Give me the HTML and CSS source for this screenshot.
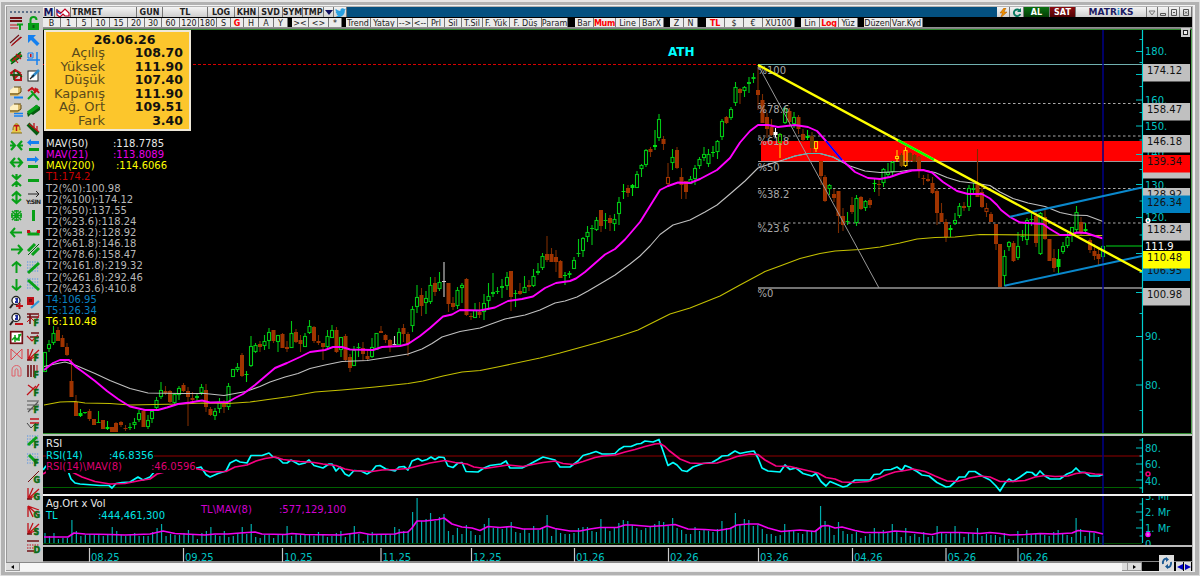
FILE: index.html
```html
<!DOCTYPE html>
<html lang="tr">
<head>
    <meta charset="UTF-8">
    <title>TRMET</title>
    <link rel="stylesheet" href="styles.css">
</head>
<body>
<div class="window">
    <aside class="sidebar">
        <div class="grip"></div>
        <div class="tools">
            <div class="tool-column" id="tools-left"></div>
            <div class="tool-column" id="tools-right"></div>
        </div>
    </aside>
    <main>
        <header class="titlebar">
            <button class="w12 logo">M</button>
            <button class="w16">
                <svg width="14" height="10" viewBox="0 0 14 10">
                    <path d="M1 2l4 3 4-4 4 4v3H9L7 6 4 9 1 7z" fill="#fff" stroke="#c00020" stroke-width="1.2"/>
                    <path d="M1 1v3l4 2" fill="none" stroke="#2040c0" stroke-width="1.2"/>
                </svg>
            </button>
            <button class="w66 left">TRMET</button>
            <button class="w26">GUN</button>
            <button class="w45">TL</button>
            <button class="w27">LOG</button>
            <button class="w24">KHN</button>
            <button class="w24">SVD</button>
            <button class="w20">SYM</button>
            <button class="w21">TMP</button>
            <button class="w10"><svg width="8" height="5" viewBox="0 0 8 5"><path d="M0 0h8L4 5z" fill="#101060"/></svg></button>
            <button class="w13">
                <svg width="11" height="9" viewBox="0 0 24 20"><path d="M24 3c-1 .4-1.800.6-2.800.8 1-.6 1.800-1.600 2.200-2.700-1 .6-2 1-3.100 1.200a4.900 4.900 0 0 0-8.400 4.500C7.700 6.600 4.100 4.600 1.700 1.700a4.900 4.900 0 0 0 1.500 6.500c-.8 0-1.600-.2-2.200-.6a5 5 0 0 0 4 4.900c-.7.2-1.500.2-2.200.1a5 5 0 0 0 4.600 3.400A10 10 0 0 1 0 18a14 14 0 0 0 21.500-12.500C22.500 5 23.300 4 24 3z" fill="#2a9fe0"/></svg>
            </button>
            <span class="fill"></span>
            <button class="w13"><svg width="9" height="10" viewBox="0 0 9 10"><path d="M5 0L1 5h2.500L1.500 10 8 4H5l2-4z" fill="#f09000" stroke="#a05000" stroke-width=".5"/></svg></button>
            <button class="w14"><svg width="10" height="10" viewBox="0 0 10 10"><path d="M8 3a3.300 3.300 0 1 0 .3 3" fill="none" stroke="#087860" stroke-width="1.900"/><path d="M9 0v4H5z" fill="#087860"/></svg></button>
            <button class="w26 buy">AL</button>
            <button class="w26 sell">SAT</button>
            <button class="w71 brand">MATR<i>i</i>KS</button>
            <button class="w11"><svg width="8" height="6" viewBox="0 0 8 6"><path d="M1 1h6L4 5z" fill="none" stroke="#777"/></svg></button>
            <button class="w11"><svg width="6" height="6" viewBox="0 0 6 6"><path d="M.5 3.500h5v2h-5z" fill="none" stroke="#555"/></svg></button>
            <button class="w11"><svg width="6" height="7" viewBox="0 0 6 7"><path d="M.5.5h5v6h-5zM2 3.500h2" fill="none" stroke="#555"/></svg></button>
            <button class="w12"><svg width="6" height="7" viewBox="0 0 6 7"><path d="M.5.5h5v6h-5zM2 2.500l2 2m0-2l-2 2" fill="none" stroke="#555"/></svg></button>
        </header>
        <nav class="toolbar" id="toolbar"></nav>

        <section class="pane price">
            <svg id="price" width="1149" height="404" viewBox="43 30 1149 404"></svg>
            <table class="quote">
                <caption>26.06.26</caption>
                <tr><th>Açılış</th><td>108.70</td></tr>
                <tr><th>Yüksek</th><td>111.90</td></tr>
                <tr><th>Düşük</th><td>107.40</td></tr>
                <tr><th>Kapanış</th><td>111.90</td></tr>
                <tr><th>Ağ. Ort</th><td>109.51</td></tr>
                <tr><th>Fark</th><td>3.40</td></tr>
            </table>
            <ul class="legend">
                <li class="white"><span>MAV(50)</span>:118.7785</li>
                <li class="magenta"><span>MAV(21)</span>:113.8089</li>
                <li class="yellow"><span class="wide">MAV(200)</span>:114.6066</li>
                <li class="red">T1:174.2</li>
                <li>T2(%0):100.98</li>
                <li>T2(%100):174.12</li>
                <li>T2(%50):137.55</li>
                <li>T2(%23.6):118.24</li>
                <li>T2(%38.2):128.92</li>
                <li>T2(%61.8):146.18</li>
                <li>T2(%78.6):158.47</li>
                <li>T2(%161.8):219.32</li>
                <li>T2(%261.8):292.46</li>
                <li>T2(%423.6):410.8</li>
                <li class="blue">T4:106.95</li>
                <li class="blue">T5:126.34</li>
                <li class="yellow">T6:110.48</li>
            </ul>
            <span class="maximize"></span>
        </section>
        <section class="pane rsi">
            <svg id="rsi" width="1149" height="58" viewBox="43 436 1149 58"></svg>
            <ul class="legend">
                <li class="white">RSI</li>
                <li class="cyan"><span>RSI(14)</span>:46.8356</li>
                <li class="pink"><span>RSI(14)\MAV(8)</span>:46.0596</li>
            </ul>
        </section>
        <section class="pane volume">
            <svg id="volume" width="1149" height="49" viewBox="43 496 1149 49"></svg>
            <ul class="legend">
                <li class="white">Ag.Ort x Vol</li>
                <li class="cyan"><span>TL</span>:444,461,300</li>
            </ul>
            <div class="legend average magenta"><span>TL\MAV(8)</span>:577,129,100</div>
        </section>
        <section class="pane months">
            <svg id="months" width="1149" height="15" viewBox="43 547 1149 15"></svg>
        </section>
    </main>
    <footer>
        <div class="scrollbar">
            <span class="thumb"><svg width="3" height="4" viewBox="0 0 3 4"><path d="M3 0v4L0 2z"/></svg></span>
            <span class="thumb small"></span>
            <span class="thumb"><svg width="3" height="4" viewBox="0 0 3 4"><path d="M0 0v4l3-2z"/></svg></span>
        </div>
        <div class="corner">
            <span class="sync">
                <svg width="12" height="12" viewBox="0 0 12 12"><path d="M6 2C3 1 1.500 4 2 7M6 10c3 1 4.500-2 4-5" fill="none" stroke="#1c5a94" stroke-width="1.900"/><path d="M5 0l3 2.500L5 5zM7 7v5L4 9.500z" fill="#1c5a94"/></svg>
            </span>
            <span class="step"><svg width="6" height="6" viewBox="0 0 6 6"><path d="M6 0v6L0 3z" fill="#0000c0"/></svg></span>
            <span class="step"><svg width="6" height="6" viewBox="0 0 6 6"><path d="M0 0v6l6-3z" fill="#0000c0"/></svg></span>
        </div>
    </footer>
</div>
<script src="chart.js"></script>
</body>
</html>
```
FILE: styles.css
```css
* {
    box-sizing: border-box;
}

html, body {
    margin: 0;
    padding: 0;
    width: 1200px;
    height: 576px;
    overflow: hidden;
    font-family: "DejaVu Sans", sans-serif;
    background: #b5b5b5;
}

.window {
    display: grid;
    grid-template-columns: 37px 1149px;
    grid-template-rows: 555px 9px;
    width: 1200px;
    height: 576px;
    padding: 7px 8px 5px 6px;
    background: #b4b4b4;
    box-shadow: inset 1px 2px 0 #e6e6e6, inset -1px -1px 0 #dadada, inset 5px 5px 0 #b2b2b2, inset -5px -4px 0 #b2b2b2, inset 6px 6px 0 #f4f4f4, inset -7px -5px 0 #eee;
}

.sidebar {
    background: #c8c8c8;
    border-left: 1px solid #999;
    padding: 4px 0 0 3px;
}

.grip {
    width: 30px;
    height: 2px;
    border-top: 2px dotted #5c7088;
}

.tools {
    display: flex;
    margin-top: 2px;
}

.tool-column {
    width: 17px;
}

.tool-column svg {
    display: block;
    width: 13px;
    height: 13px;
    margin: 2px 0 4.430px 0;
    overflow: visible;
}

main {
    display: flex;
    flex-direction: column;
    background: #000;
}

button {
    display: flex;
    align-items: center;
    justify-content: center;
    flex: none;
    padding: 0;
    margin: 0;
    border: 0 solid #777;
    border-right-width: 1px;
    overflow: hidden;
    white-space: nowrap;
    font-family: "DejaVu Sans", sans-serif;
    color: #222;
    background: #ececec;
}

.titlebar {
    display: flex;
    height: 10px;
    background: #045080;
}

.titlebar button {
    height: 10px;
    padding-top: 1px;
    font-size: 8px;
    font-weight: bold;
    line-height: 9px;
    background: linear-gradient(#f4f4f4, #cfcfcf);
}

.titlebar .fill {
    flex: 1;
}

.titlebar .left {
    justify-content: flex-start;
    padding-left: 1px;
}

.titlebar .logo {
    font-size: 10px;
    color: #15155c;
}

.titlebar .buy {
    color: #fff;
    background: linear-gradient(#0a7010, #043c06);
}

.titlebar .sell {
    color: #fff;
    background: linear-gradient(#8c0c10, #500204);
}

.titlebar .brand {
    font-size: 9px;
    color: #1c1c64;
}

.brand i {
    font-style: normal;
    color: #2090d0;
}

.w10 { width: 10px; }
.w11 { width: 11px; }
.w12 { width: 12px; }
.w13 { width: 13px; }
.w14 { width: 14px; }
.w16 { width: 16px; }
.w20 { width: 20px; }
.w21 { width: 21px; }
.w24 { width: 24px; }
.w26 { width: 26px; }
.w27 { width: 27px; }
.w45 { width: 45px; }
.w66 { width: 66px; }
.w71 { width: 71px; }

.toolbar {
    display: flex;
    height: 13px;
    padding-top: 1px;
    border-bottom: 1px solid #2d8a2d;
    background: linear-gradient(#000 10px, #999 10px, #777 12px);
}

.toolbar button {
    height: 9px;
    padding-top: 1px;
    font-size: 8px;
    line-height: 9px;
}

.toolbar .active {
    color: #f00;
    font-weight: bold;
    letter-spacing: -.3px;
}

.pane {
    position: relative;
    flex: none;
    background: #000;
}

.pane > svg {
    display: block;
}

.pane text {
    font-size: 10px;
}

.price {
    height: 406px;
    border-bottom: 2px solid #b8c4b8;
}

.rsi {
    height: 60px;
    border-bottom: 2px solid #f0f0f0;
}

.volume {
    height: 51px;
    border-bottom: 2px solid #bbb;
}

.months {
    height: 15px;
    border-bottom: 1px solid #888;
}

.quote {
    position: absolute;
    left: 1px;
    top: 0;
    width: 147px;
    height: 101px;
    padding: 1px 6px 0 5px;
    display: block;
    border: 2px solid #eee8d8;
    background: #fcc62c;
    border-spacing: 0;
    line-height: 13.430px;
}

.quote caption {
    display: block;
    padding-left: 15px;
    font-size: 12.500px;
    font-weight: bold;
    color: #111;
}

.quote tbody {
    display: block;
}

.quote tr {
    display: flex;
    height: 13.430px;
}

.quote th {
    width: 54px;
    padding: 0;
    text-align: right;
    font-size: 13px;
    font-weight: normal;
    color: #5a4a1c;
}

.quote td {
    width: 78px;
    padding: 0;
    text-align: right;
    font-size: 12.500px;
    font-weight: bold;
    color: #111;
}

.legend {
    position: absolute;
    left: 3px;
    top: 108px;
    margin: 0;
    padding: 0;
    list-style: none;
    font-size: 10px;
    line-height: 11.120px;
    white-space: nowrap;
    color: #b8b8b8;
}

.legend span {
    display: inline-block;
    width: 67px;
}

.legend .wide {
    width: 70px;
}

.rsi .legend {
    top: 2px;
}

.rsi .legend li {
    width: max-content;
    line-height: 11.500px;
    background: #000;
}

.rsi .cyan span {
    width: 63px;
}

.rsi .pink span {
    width: 105px;
}

.volume .legend {
    top: 2px;
}

.volume .legend li {
    line-height: 12px;
}

.volume .cyan span {
    width: 52px;
}

.volume .average {
    left: 158px;
    top: 8px;
}

.volume .average span {
    width: 78px;
}

.legend .white { color: #e8e8e8; }
.legend .yellow { color: #ff0; }
.legend .red { color: #c80000; }
.legend .blue { color: #0880c0; }
.legend .cyan { color: #00e4e4; }
.legend .pink { color: #dc0070; }
.legend .magenta { color: #e800e8; }
.legend.magenta { color: #d000d0; }

.maximize {
    position: absolute;
    top: -2px;
    right: 2px;
    width: 9px;
    height: 9px;
    border: 2px solid #ccc;
    outline: 1px solid #222;
    outline-offset: -3px;
    background: #eee;
}

footer {
    grid-column: 1 / 3;
    display: flex;
    background: #000;
}

.scrollbar {
    display: flex;
    width: 1136px;
    background: #f6f6f6;
    border-top: 1px solid #888;
}

.thumb {
    display: flex;
    align-items: center;
    justify-content: center;
    width: 14px;
    border: 1px solid #999;
    border-width: 0 1px 1px 0;
    background: #ddd;
}

.thumb.small {
    width: 6px;
    margin-left: auto;
}

.corner {
    position: relative;
    display: flex;
    flex: 1;
    padding-left: 34px;
    gap: 1px;
}

.sync {
    position: absolute;
    left: 17px;
    bottom: 0;
    display: flex;
    align-items: center;
    justify-content: center;
    width: 15px;
    height: 16px;
    background: #ddd;
}

.step {
    display: flex;
    align-items: center;
    justify-content: center;
    width: 7px;
    background: #ddd;
}
```
FILE: chart.js
```js
const teal = "#00c4c4";

// toolbar: label, width, "!" marks an active button, null is a gap
const toolbar = [
    ["B", 18], ["1", 16], ["5", 15], ["10", 18], ["15", 18], ["20", 17], ["30", 17], ["60", 18], ["120", 19], ["180", 18],
    ["S", 14], ["G", 13, "!"], ["H", 15], ["A", 15], ["Y", 14], [null, 4], ["><", 17], ["<>", 20], ["*", 13], [null, 4],
    ["Trend", 25], ["Yatay", 27], ["-->", 15], ["<--", 15], ["Prl", 17], ["Sil", 17], ["T.Sil", 21], ["F. Yük", 27], ["F. Düş", 32], ["Param", 26],
    [null, 7], ["Bar", 19], ["Mum", 22, "!"], ["Line", 24], ["BarX", 24], [null, 6], ["Z", 14], ["N", 14], [null, 8],
    ["TL", 19, "!"], ["$", 19], ["€", 19], ["XU100", 32], [null, 6], ["Lin", 19], ["Log", 19, "!"], ["Yüz", 19], [null, 6],
    ["Düzen", 27], ["Var.Kyd", 32]
];
document.querySelector("#toolbar").innerHTML = toolbar.map(([label, width, active]) => label === null
    ? `<span style="width:${width}px"></span>`
    : `<button class="${active ? "active" : ""}" style="width:${width}px">${label.replace(/</g, "&lt;")}</button>`).join("");

// icons on a 13 x 13 grid
const p = (d, color, width = 1.5) => `<path d="${d}" fill="none" stroke="${color}" stroke-width="${width}"/>`;
const f = (d, color) => `<path d="${d}" fill="${color}"/>`;
const tag = (letter) => `<text x="6.500" y="12.500" font-size="8" font-weight="bold" fill="#0a6a14" stroke="#0a6a14" stroke-width=".5">${letter}</text>`;
const G = "#08a018", D = "#065c10", R = "#c01018", K = "#701014", B = "#1480f0";
const box = f("M0 4l4-4h7v6l-3 3H0z", "#d8b868") + f("M0 3l4-3h4v6H0z", "#fff0c0") + p("M0 7h8l3-2V1M4 0h7", "#604810", 1);
const lens = `<circle cx="6" cy="4.500" r="4" fill="#fff" stroke="#222" stroke-width="1.300"/>` + f("M5 2h3v5H5V5h1z", "#2030a0") + p("M3 8l-3 4", "#222", 2);
const dots = `<path d="M0 1h12M0 4h12M0 7h12M0 10h12" stroke="#4c90e8" stroke-width="1.200" stroke-dasharray="1.200 1.300"/>`;
const rays = p("M1 12V1M1 12L6 1M1 12l11-10M1 12l9-4", R, 1.3) + p("M0 12h5", K, 1.5);
const left = [
    p("M0 1h12M0 4h12", K, 1.8) + p("M0 8h8M0 11h8", R, 1.2) + p("M7 7.500h6M10 7v6", G, 2),
    p("M0 9l9-8M2 11l9-8", K, 1.1) + p("M1 12l11-9", R, .9),
    p("M1 10l10-8", G, 4.5) + p("M1 12l11-8M1 8l10-8", D, 1.2) + p("M2 9l9-7M3 5l5 6M6 2l5 5", R, 1.1),
    p("M1 4l4-3 5 3-5 5zM3 6h8v5H5z", R, 2) + p("M0 6h10M4 1v10M7 3l5 5", D, 1.3),
    box + p("M4 10.500h9", B, 2),
    box + p("M4 9.500h9M4 12h9", B, 1.3),
    f("M1 11c3-2 1-9 5.500-10C11 2 9 9 12 11z", "#e8c848") + p("M1 11h11M3 8c0-8 7-8 7 0", "#806818", 1) + f("M4 3h5v1.500H7.200V9H5.800V4.500H4z", R),
    p("M0 6.500h5M8 6.500h5M1 2l4 4.500L1 11M12 2L8 6.500l4 4.500", G, 2.2),
    p("M1 6.500h11M5 2L1 6.500 5 11M8 2l4 4.500L8 11", G, 2.2),
    p("M6.500 0v5M6.500 8v5M2 1l4.500 4L11 1M2 12l4.500-4 4.500 4", G, 2.2),
    p("M6.500 1v11M2 5l4.500-4L11 5M2 8l4.500 4L11 8", G, 2.2),
    p("M6.500 1v11M1 6.500h11M2 2l9 9M11 2l-9 9M4 2h5M4 11h5M2 4v5M11 4v5", G, 1.6),
    p("M1 6.500h11M5 2L1 6.500 5 11", G, 2),
    p("M1 6.500h11M8 2l4 4.500L8 11", G, 2),
    p("M6.500 1v11M2 5l4.500-4L11 5", G, 2),
    p("M6.500 1v11M2 8l4.500 4L11 8", G, 2),
    lens + p("M6 10h7M9.500 7v6", R, 2),
    lens + p("M5 11h8", R, 2),
    `<rect x=".7" y=".7" width="11.600" height="11.600" fill="#fff" stroke="${K}" stroke-width="1.700"/>` + p("M2 9l3-3 2 3 4-6M9 3v7M5 4v7", G, 1.5),
    p("M1 12V1l11 10V1z", "#e04048", 1),
    p("M2 11V5c0-6 9-6 9 0v6M5 11V6c0-3 3-3 3 0v5M2 11h3M8 11h3", "#e06068", 1)
];
const right = [
    p("M3.500 6V3c0-4 6-4 6 0", G, 2) + f("M1 6h11v7H1z", G) + f("M5.500 8h2v3h-2z", D),
    f("M1 1h8L6.500 3.500l6 6-2.500 2.500-6-6L1 9z", B),
    p("M0 8h13M10 0v13", B, 1.5) + p("M1 1h5v5H1z", B, 1) + f("M3 2h1.500v3H3z", R),
    `<rect x="1" y="2" width="10" height="10" fill="#fff" stroke="#222"/>` + p("M5 8l7-7", "#2c88c8", 2.5) + p("M3 10l4-4", "#222", 1.2),
    p("M4 4l8 9M1 12l6-6", G, 2) + p("M1 4l4-3 3 3M8 1l4 5M7 6l4-4", R, 2),
    f("M0 9l9-8 4 2v3l-7 5-2-1-3 3z", D) + p("M1 9l10-7", G, 3.5),
    p("M1 2l10 10", D, 4) + p("M2 2l10 8M7 1v5M10 4v5", R, 1.3),
    f("M0 3.500L4 0v2h8v3H4v2z", B) + p("M2 10.500h10", G, 3),
    f("M12 3.500L8 0v2H0v3h8v2z", B) + p("M1 10.500h10", G, 3),
    p("M1 6.500h11", G, 3),
    p("M1 3h11M9 0l3 3-3 3", "#222", 1) + `<text x="-1" y="13" font-size="6" font-weight="bold" fill="#222" textLength="15">Y:SIN</text>`,
    p("M6.500 1v11", G, 3),
    p("M2 5v3h9V5", G, 3) + f("M0 4h3v3H0zM10 4h3v3h-3z", R),
    p("M1 8l7-7M5 12l7-7", G, 3) + p("M1 12L12 1", D, 1),
    dots + p("M1 12L12 2", G, 3),
    dots + p("M1 2l11 10", G, 3),
    f("M0 1h7v8H0z", R) + f("M2 3h3v3H2z", K) + p("M4 12l8-7", "#3098d8", 2.2),
    p("M0 1h12M0 4h12M3 1v10", K, 1.6) + p("M0 9l4-4 4 4 4-7", R, 1) + tag("F"),
    p("M4 2h8M3 6h9", K, 1.7) + p("M0 5l5 5 6-6", R, 1.1) + tag("F"),
    rays + tag("F"),
    p("M1 0v12M4 0v12M7 0v12", K, 1.6) + p("M10 0v8", R, 1) + tag("F"),
    p("M1 2l7 5 4-6M0 12L9 3", R, 1.3) + tag("F"),
    p("M0 1h12M0 5h12M0 9h8M1 12L11 2", "#555", 1.1) + tag("F"),
    p("M3 1h9M3 5h9", R, 1.5) + p("M0 5l4 5 5-5", "#444", 1) + tag("F"),
    dots + p("M1 10l9-8", G, 3) + tag("F"),
    dots + p("M2 2l8 8", G, 3) + tag("F"),
    p("M1 12L12 1", K, 1) + tag("G"),
    rays + tag("G"),
    p("M1 1v11M1 1l5 11M1 1l11 10M1 1l11 4", R, 1.3) + tag("G"),
    rays + tag("S"),
    p("M0 1h12M0 11h7", K, 1.3) + `<path d="M0 5h12M0 8h7" stroke="${R}" stroke-dasharray="1.500 1"/>` + tag("D")
];
const icon = (content) => `<svg viewBox="0 0 13 13">${content}</svg>`;
document.querySelector("#tools-left").innerHTML = left.map(icon).join("");
document.querySelector("#tools-right").innerHTML = right.map(icon).join("");

// drawing helpers
const line = (x1, y1, x2, y2, color, width = 1, dash = "") =>
    `<line x1="${x1}" y1="${y1}" x2="${x2}" y2="${y2}" stroke="${color}" stroke-width="${width}" stroke-dasharray="${dash}"/>`;
const curve = (points, color, width) =>
    `<polyline points="${points}" fill="none" stroke="${color}" stroke-width="${width}" stroke-linejoin="round"/>`;
const rect = (x, y, w, h, color) => `<rect x="${x}" y="${y}" width="${w}" height="${h}" fill="${color}"/>`;
const text = (x, y, content, color) => `<text x="${x}" y="${y + 3.5}" fill="${color}">${content}</text>`;
const tick = (y, major) => line(major ? 1136 : 1139.5, y, 1142, y, teal);

// x, high, body top, body bottom, low, kind (g: rising, r: falling, f: filled rising, h: hollow falling, w: white, y: yellow, o: olive)
const candles = `45 352 352 372 372 g,49 340 344 349 352 g,53.5 326 333 343 345 g,58 327 330 341 341 r,62.5 335 338 347 347 r,67 343 347 355 356 r,
71.5 359 381 397 397 r,76 395 402 416 416 r,80.5 409 413 416 417 f,85 412 412 413 414 g,89.5 409 411 419 421 r,94 419 419 425 425 r,98.5 411 422 423 423 g,
103 420 420 429 429 r,107.5 421 427 429 430 f,112 427 427 432 432 r,116 422 423 432 432 r,121 421 422 425 427 r,125.5 425 428 429 431 r,130 423 427 428 430 g,
134.5 418 422 425 429 g,139 410 413 420 422 g,143.5 410 411 427 427 r,148 415 420 427 429 g,152 410 411 419 423 g,156.5 397 400 408 410 g,161 382 390 397 399 g,
165.5 386 391 393 395 r,170 390 391 402 403 r,174.5 393 394 403 405 g,179 386 388 395 400 g,183.5 383 385 391 392 r,188 387 391 397 426 r,192.5 392 398 400 402 r,
197 393 396 398 401 g,201.5 384 387 393 395 g,206 384 390 407 412 r,210.500 407 409 415 416 r,215 408 411 416 420 g,219.5 398 402 409 413 g,224 400 404 407 413 r,
228.5 383 386 407 410 g,233 369 369 377 377 g,237.5 363 367 370 372 g,242 353 355 376 377 r,246.5 371 374 375 382 f,251 336 346 366 367 g,255.5 343 345 352 353 g,
260 341 344 347 352 r,264.5 335 341 346 350 g,269 328 332 341 349 g,273.5 330 330 341 343 r,278 335 335 342 352 g,282.5 333 334 348 348 r,287 341 347 349 352 r,
291.5 321 333 348 348 g,296 329 332 342 343 r,300.5 335 340 344 352 r,305 333 336 347 347 g,309.5 320 326 333 334 g,314 326 327 341 343 r,318.5 335 341 343 345 r,
323 343 343 347 360 r,327.5 330 336 347 348 g,332 325 330 338 338 g,336.5 327 330 352 353 r,341 337 337 350 357 g,345.5 334 336 360 362 r,350 354 357 368 372 r,
354 346 350 366 366 g,358.5 343 347 348 357 g,363 342 348 354 361 r,367.5 350 356 359 360 r,372 338 347 357 358 g,376.5 333 333 350 350 g,381 326 331 333 333 r,
385.5 334 335 340 343 r,390 339 340 346 352 r,394.5 336 344 345 345 w,399 328 332 345 345 g,403.5 324 328 334 342 r,408 332 334 344 356 r,412.5 306 309 326 332 g,
417 285 297 307 313 g,421.5 288 295 306 316 r,426 291 298 303 314 g,430.5 277 285 302 304 g,435 277 283 292 296 r,439.5 272 282 289 291 g,444 262 281 281.5 297 w,
448.5 283 283 304 312 r,453 297 303 307 310 r,457.5 287 290 306 309 g,462 283 285 288 303 g,466.5 278 279 315 316 r,471 313 316 317 320 r,475 303 310 318 318 g,
479.5 302 312 315 318 r,484 294 303 312 320 g,488.5 283 296 301 310 g,493 273 292 294 297 g,497.5 287 291 292 294 g,502 279 286 288 298 g,507 272 277 286 290 g,
511 271 271 297 311 r,515.5 290 293 294 307 g,520 283 291 294 295 r,524.5 276 287 293 293 g,529 280 285 287 291 r,533.5 269 276 286 287 g,538 263 271 273 275 g,
542.5 253 256 268 270 g,547 236 254 260 262 r,551.5 248 254 262 262 r,556 250 257 262 272 r,560.5 260 261 278 278 r,565 272 275 276 285 f,569.5 271 273 275 278 g,
574 257 260 269 269 g,578.5 239 253 254 257 g,583 237 238 251 257 g,587.5 226 232 237 242 g,592 225 228 229 245 g,596.5 217 220 230 231 g,601 210 210 226 232 r,
605.5 213 220 221 229 g,610 215 218 223 231 r,614.5 214 219 224 231 g,619 197 202 214 225 g,623.5 184 191 192 199 f,628 185 188 193 197 r,632.500 184 185 188 196 f,
637 171 174 188 188 g,641.5 164 165 169 177 g,646 149 150 165 167 g,650.5 147 149 152 157 r,655 130 145 147 150 f,659 114 119 138 141 g,663.5 136 139 144 150 r,
668 163 177 184 186 h,672.5 149 157 163 170 g,677 147 150 168 169 r,681.5 168 177 185 199 r,686 181 181 192 199 r,690.5 176 179 184 184 g,695 165 168 179 185 g,
699.5 157 159 166 169 g,704 147 154 158 161 g,708.5 149 154 164 167 g,713 146 152 153 157 f,717.5 140 141 152 159 g,722 119 121 137 140 g,726.5 116 117 123 124 r,
731 107 109 118 120 g,735.5 82 87 103 106 g,740 88 89 93 104 r,744.5 86 87 91 97 g,749 77 82 84 93 g,753.5 73 77 79 83 g,758 67 90 95 110 r,762.5 94 100 123 123 r,
767 113 117 129 138 r,771.5 119 127 135 136 r,775.5 128 132 135 138 W,780 133 134 143 158 Y,785 107 108 123 124 g,789.5 108 111 122 127 r,794 112 117 124 128 g,
798.5 115 117 129 134 r,803 129 134 140 142 r,807.5 130 136 138 140 f,812 132 136 148 153 o,816 141 141 149 152 y,821 161 161 176 185 r,825 175 177 201 202 r,
829.5 184 185 189 195 g,834 189 194 198 202 r,838.5 191 191 216 233 r,843 208 216 225 231 r,847.5 212 221 222 225 g,852 197 205 212 214 r,856.5 195 198 223 226 g,
861 196 197 209 210 r,865.5 200 201 208 211 g,870 198 200 205 208 r,874.5 178 183 184 192 f,879 180 184 185 196 r,883.5 168 169 183 187 g,888 163 172 175 178 g,
892.5 161 162 172 177 g,897 150 156 159 162 y,901.5 153 155 166 167 o,905.5 147 150 166 167 y,910 152 153 160 162 o,914.500 154 155 162 162 o,919 156 157 170 178 r,
923.5 175 178 179 185 r,928 174 179 181 182 r,932.5 177 183 193 194 r,937 189 191 213 225 r,941.5 203 213 222 222 r,946 219 222 237 242 r,950.5 225 228 230 237 f,
955 213 220 224 225 g,959.5 203 206 216 218 g,964 202 206 208 211 r,969 185 188 207 211 g,973.5 183 188 190 193 g,977.5 149 184 197 197 r,982 185 192 207 208 r,
986.5 203 208 212 217 h,991 212 214 222 222 r,996 224 224 244 250 r,1000 244 244 287 287 r,1004.5 250 256 276 286 g,1009 241 242 247 251 g,1013.500 241 243 261 262 r,
1018 232 246 258 260 g,1022.5 230 236 237 241 g,1027 218 220 240 245 g,1031.500 213 219 220 226 g,1036 210 216 243 247 r,1040.500 212 213 254 255 g,1045 210 217 239 240 r,
1049.5 239 239 261 261 r,1054 249 258 268 272 r,1058.5 249 259 267 273 f,1063 242 246 252 254 g,1067.5 233 237 246 248 g,1072 227 227 234 242 g,1076.500 206 212 230 233 g,
1081 217 222 233 235 r,1085.5 223 229 231 232 f,1090 238 240 250 253 r,1094.500 244 251 256 260 r,1098.5 249 254 259 266 r,1103 245 246 257 262 g`;
const colors = {g: "#00c814", f: "#00e010", r: "#a03400", h: "#a03400", w: "#d0d0d0", W: "#ffffff", y: "#ffd000", Y: "#20c000", o: "#6c3800"};
const drawCandle = (row) => {
    const [a, high, top, bottom, low, kind] = row.trim().split(" ");
    const x = parseFloat(a), t = parseFloat(top), b = parseFloat(bottom);
    const color = colors[kind];
    const wick = kind === "r" || kind === "h" ? "#7c2c00" : color;
    const hollow = "ghyY".includes(kind) && b - t > 2;
    return line(x, high, x, t, wick, 1.1) + line(x, b, x, low, kind === "Y" ? "#ffd000" : wick, 1.1) + (hollow
        ? `<rect x="${x - 1.5}" y="${t + .5}" width="3" height="${b - t - 1}" fill="none" stroke="${color}" stroke-width="1.100"/>`
        : rect(x - 2, t, 4, Math.max(1, b - t), color));
};

const mav21 = "44,370 53,363 60,360 69,360 76,367 83,372 95,381 107,391 118,399 130,406.5 145,410 158,410 167,407.5 178,404 190,402.5 202,400.5 210,402.5 228,402 235,398 243,394 247,391 255,385 265,376.5 275,368 287,363 300,357 310,352 325,350 333,347 342,347 350,349.5 373,350 382,347 400,346 408,344 420,336 430,328 443,316.5 452,314.5 460,310 480,310.5 495,307.5 508,301 522,299 533,296.5 545,288 556,283 570,281 576,278.5 585,272 605,254.5 615,249 625,239.5 640,222 650,206 660,190 668,186 678,182.5 690,183 700,179 717,170 730,158 740,142.5 750,131 758,125 768,125 778,127 795,125 808,127 817,131 826,141 842,160 855,172 868,178 880,179 890,177 900,173.5 912,170.5 923,170 932,172.5 943,182 957,191 968,194 982,194 990,198.5 997,205 1001,210 1010,217 1020,222.5 1043,224 1050,229 1060,235 1070,235 1077,232.5 1086,233 1095,236 1103,238.5";
const mav50 = "44,366.5 55,364 65,362 75,365 95,373.5 110,380.5 130,388.5 148,393 180,393.5 205,393.5 224,395.5 246,391.5 260,386.5 270,382 285,377 298,373.5 310,368.5 325,365 342,361.5 367,360.5 380,358.5 393,356.5 408,354 422,349 432,343.5 442,337 460,331.5 480,328 505,319 525,315 540,310 555,303 565,301 577,297 588,291 605,281 615,275 630,264 640,256 650,246 660,234.5 673,225 690,220 705,212 717,205 730,194 745,181 758,168 770,164 783,160 795,156 808,153.5 820,153.5 833,157 843,162.5 850,166 865,171 880,172.5 900,171.5 910,170 923,170 935,172.5 947,177.5 960,181.5 973,183 990,185.5 1000,192 1013,198.5 1028,203 1045,206.5 1060,212.5 1072,215 1087,215.5 1103,221.5";
const mav200 = "44,405 60,402 75,401.5 85,403 110,403.5 130,405 155,404.5 180,404 203,403 228,403.5 250,402 268,399.5 290,396.5 315,392 342,390 375,387 408,383.5 423,381 443,376 462,372 480,370.5 500,366.5 540,358 560,353 600,342 620,336 638,330 655,321.5 670,314 690,308 720,296 740,285 765,271.5 780,266 800,258.5 820,253.5 835,251 860,249.5 880,247 900,243 917,239 935,237.5 955,237 980,234.5 1030,235 1103,235.5";

const levels = [["%100", 64.5], ["%78.6", 103.5], ["%61.8", 136], ["%50", 161.5], ["%38.2", 188.5], ["%23.6", 223], ["%0", 288]];
const majors = [51.5, 74.5, 100, 126, 154.5, 184.5, 217.5, 253.5, 292.5, 336.5, 385];
const minors = [39.5, 62.5, 86.5, 112.5, 140, 169.5, 201, 235, 272.5, 313.5, 360, 410.5];
const axis = [["180.", 51.5], ["160.", 100], ["150.", 126.5], ["140.", 153.5], ["130.", 185], ["120.", 217.5], ["90.", 336.5], ["80.", 385]];
const prices = [
    ["174.12", 64, "#c0c0c0"], ["158.47", 103, "#c0c0c0"], ["146.18", 135, "#c0c0c0"], ["", 161, "#c0c0c0"], ["139.34", 155, "#ff0000"],
    ["128.92", 188, "#c0c0c0"], ["126.34", 195.5, "#0080c0"], ["118.24", 223, "#c0c0c0"], ["106.95", 263.5, "#0080c0"],
    ["110.48", 251, "#ffff00"], ["100.98", 288, "#c0c0c0"]
];
document.querySelector("#price").innerHTML =
    line(43, 64.5, 758, 64.5, "#d80000", 1, "3 2") +
    rect(761, 141, 381, 20, "#ff0000") +
    levels.map(([, y]) => [64.5, 161.5, 288].includes(y)
        ? line(758, y, 1142, y, y === 64.5 ? "#70b0b0" : "#999", y === 288 ? 1.5 : 1)
        : line(758, y, 1142, y, "#aaa", 1, "2.500 2.500")).join("") +
    candles.split(",").map(drawCandle).join("") +
    levels.map(([label, y]) => text(757.5, y + 5.5, label, "#a8a8a8")).join("") +
    curve(mav200, "#c4c000", 1.1) +
    curve(mav50, "#c0c0c0", 1.1) +
    curve("783,160 795,156 808,153.5 820,153.5 833,157 840,160.5", "#50b8b8", 1.1) +
    curve(mav21, "#ff00ff", 1.9) +
    line(826, 141, 842, 160, "#0000ff", 1.9) +
    line(1103, 30, 1103, 434, "#000088", 1.5) +
    line(758, 65, 879, 288, "#999", 1) +
    line(1010, 216.7, 1142, 187.5, "#0a88cc", 2) +
    line(1004.5, 285.7, 1142, 256, "#0a88cc", 2) +
    line(758, 65, 1142, 271.5, "#ffff00", 2.4) +
    line(898, 140.3, 934, 159.7, "#00ff00", 2.4) +
    line(1106, 246, 1142, 246, "#009010", 1.3) +
    `<text x="668" y="55.500" fill="#00ffff" style="font-size:12px" font-weight="bold">ATH</text>` +
    line(1142.5, 30, 1142.5, 434, "#00d0d0", 1.2) +
    majors.map(y => tick(y, true)).join("") + minors.map(y => tick(y, false)).join("") +
    axis.map(([label, y]) => text(1145, y, label, teal)).join("") +
    prices.map(([label, y, color]) => rect(1143, y, 47, 17.5, color) + text(1147, y + 6.5, label, "#111")).join("") +
    rect(1143, 242, 47, 9, "#000") + text(1145, 246, "111.9", "#fff") +
    `<circle cx="1148" cy="220.500" r="1.800" fill="none" stroke="#fff" stroke-width="1.500"/>` +
    line(1191.5, 30, 1191.5, 434, "#50a050") + line(43, 433.5, 1192, 433.5, "#2d8a2d");

const rsi = "43,470 46,466 55,468 62,468 68,471 71,479 75,483 80,484 100,485.5 109,485.5 112,488 116,483.5 122,482.5 130,482 138,477 143,480 150,477 155,471 165,468 175,464 185,463 192,468 197,468 201,467 206,474.5 210,477 218,473.5 226,471 230,463 236,460 240,462 247,463 251,455.5 262,455.5 269,453 273,457 278,458 283,463 287,463 291,460 299,464.5 305,463 309,460 314,465.5 323,468 329,464 332,464 336,471 340,467 345,474 349,476 354,470.5 361,471 367,474 372,471 376,466 380,465.5 386,469 395,471 399,467 404,466.5 408,470 412,461 418,458.5 422,461 427,459.5 431,457 435,459.5 439,457 444,457.5 448,466 453,467.5 458,463 462,462.5 466,471.5 478,472 484,468 490,465.5 501,464 506,461 510,468 522,468 530,464 543,457 555,460 560,467 570,467 578,461 583,455.5 590,453.5 596,451.5 602,454 610,454 615,453.5 619,449.5 624,446.5 631,446.5 637,444 641,443.5 645,441 653,442 659,439.5 662,448 668,465.5 673,462.5 677,465 682,470.5 687,471.5 693,467 703,463.5 712,462.5 718,459 722,456 728,455.5 735,451 740,453.5 747,452 754,451 758,458 762,468 768,471 780,472 785,465 790,469.5 796,468 803,473.5 812,476 816,473.5 821,481.5 826,486 830,481.5 836,484 843,487 847,486 855,480 870,480 874,474.5 880,474 884,470 891,469.5 897,467 902,470.5 905,465.5 910,467.5 917,471.5 922,475 929,476 937,482.5 946,487 950,486.5 955,482 959,477 965,477 969,471.5 975,471.5 982,476 990,480 996,486 1000,491 1005,483 1009,479 1013,481.5 1020,477 1027,472 1032,472.5 1036,476 1040,471 1045,476 1050,479 1060,479 1067,474 1072,472 1076,468 1080,472 1085,472.5 1090,476 1099,476 1103,474.5";
const rsiMav = "43,474 48,471 60,468 72,472 82,477 95,481.5 110,484 125,483.5 140,480.5 150,479 157,474 165,472 175,471 195,468.5 203,470 210,472 226,471.5 235,467 247,465 256,461 265,458.5 275,457 283,459.5 300,461.5 314,462.5 323,464 336,465.5 345,469 353,470.5 372,471.5 382,470 395,469.5 408,468.5 418,466 430,463 445,460.5 455,462.5 467,464 474,467 485,468.5 495,467 508,465 523,466.5 535,464 543,462.5 555,461 563,463.5 573,464.5 583,461.5 595,457.5 603,456 615,455 625,452 635,449.5 645,446.5 655,444 660,443.5 665,446.5 669,450.5 680,459 690,463 700,463.5 717,463 730,459 737,456.5 750,454 758,454.5 765,460 776,466 790,466.5 805,470 818,473 826,477.5 835,479 842,482 855,482.5 868,481.5 878,478.5 886,475 895,472 905,470.5 913,469 925,471.5 935,476 947,481 957,481.5 970,478 980,476 990,477 1000,481.5 1012,481.5 1025,480.5 1035,477 1045,475.5 1055,476.5 1068,476 1076,473.5 1085,472.5 1095,474 1103,474.5";
document.querySelector("#rsi").innerHTML =
    line(43, 456, 1142, 456, "#600000", 1.3) + line(43, 487.5, 1142, 487.5, "#006000") +
    line(1103, 436, 1103, 494, "#000088", 1.5) +
    curve(rsi, "#00ffff", 1.7) + curve(rsiMav, "#f80080", 1.7) +
    line(1142.5, 438, 1142.5, 493, "#00d0d0", 1.2) +
    [448, 464, 480].map(y => tick(y, true)).join("") + [440, 456, 472, 488].map(y => tick(y, false)).join("") +
    text(1145, 448.5, "80.", teal) + text(1145, 464.5, "60.", teal) + text(1145, 481, "40.", teal) +
    `<circle cx="1148" cy="474" r="2" fill="none" stroke="#f00078" stroke-width="1.500"/>`;

const volumes = [10, 7, 10, 4, 5, 5, 23, 12, 7, 8, 9, 8, 8, 7, 9, 16, 12, 8, 7, 8, 10, 7, 7, 7, 11, 15, 19, 7, 9, 8, 8, 10, 13, 8, 4, 10, 12, 16, 8, 7, 12, 6, 7, 10,
    16, 9, 19, 6, 5, 8, 8, 5, 9, 9, 17, 7, 9, 8, 9, 9, 7, 11, 8, 6, 7, 10, 12, 6, 9, 17, 9, 2, 9, 11, 9, 8, 9, 9, 16, 14, 12, 12, 31, 45, 22, 24, 30, 22, 26, 29, 12, 8, 15, 9,
    18, 12, 8, 8, 19, 25, 15, 16, 14, 16, 21, 11, 10, 14, 10, 17, 13, 16, 28, 7, 15, 10, 9, 9, 10, 15, 16, 16, 12, 11, 24, 15, 12, 16, 20, 23, 22, 18, 15, 13, 15, 17, 19, 22,
    21, 17, 25, 15, 13, 9, 9, 16, 12, 14, 12, 11, 14, 22, 15, 15, 30, 18, 24, 23, 17, 18, 14, 9, 9, 7, 8, 19, 13, 12, 10, 9, 12, 12, 12, 37, 22, 17, 8, 21, 12, 9, 9, 11, 5,
    7, 9, 15, 11, 13, 10, 19, 12, 6, 15, 7, 9, 6, 11, 6, 7, 17, 10, 9, 10, 17, 11, 6, 10, 9, 15, 7, 9, 8, 8, 6, 10, 4, 3, 12, 5, 13, 8, 9, 9, 8, 7, 11, 13, 9, 8, 6, 25, 14,
    7, 11, 10, 6, 7];
const volumeMav = "44,537 68,537 74,533 85,534 110,534.5 125,535 150,534 163,531 175,533.5 205,535 215,534 228,534 240,533 255,532 262,534 285,534.5 292,533.5 305,534.5 340,535 352,533.5 360,532.5 370,534.5 395,534 400,532.5 408,532 412,528 417,521 425,521 438,519.5 444,518 452,524 462,527 472,528 480,530.5 488,526.5 500,527.5 511,526.5 523,529 540,529 547,526 555,528.5 570,531 580,531 590,529 600,527.5 617,527.5 625,525 632,525 650,526.5 665,525.5 675,524.5 688,529 705,529.5 718,530.5 730,528.5 737,525 748,524 758,524 768,528 781,531.5 800,530 815,531.5 822,526 828,525.5 835,528 842,527 855,530.5 865,532.5 885,532.5 895,531 910,532 920,533 932,534.5 940,532.5 960,532.5 980,533.5 990,532.5 1000,533.5 1010,535 1025,534.5 1040,533.5 1055,534 1072,533 1078,530.5 1095,532 1103,534";
const step = (1103 - 45) / (volumes.length - 1);
document.querySelector("#volume").innerHTML =
    volumes.map((h, i) => line(45 + i * step, 543 - h, 45 + i * step, 543, "#00acac", 1.2)).join("") +
    line(43, 543.5, 1142, 543.5, "#004800") +
    line(1103, 496, 1103, 545, "#000088", 1.5) +
    curve(volumeMav, "#f000f0", 1.7) +
    line(1142.5, 498, 1142.5, 543, "#00d0d0", 1.2) +
    [512, 528].map(y => tick(y, true)).join("") + [504, 520, 536].map(y => tick(y, false)).join("") +
    text(1145, 496.5, "3. Mr", teal) + text(1145, 512.5, "2. Mr", teal) + text(1145, 528.5, "1. Mr", teal) + text(1145, 544, "0", teal) +
    `<circle cx="1148" cy="534.500" r="2" fill="#c8c" stroke="#f0f" stroke-width="1.500"/>`;

const months = [["08.25", 89.5], ["09.25", 183.5], ["10.25", 282.5], ["11.25", 381], ["12.25", 471.5], ["01.26", 574.5],
    ["02.26", 668.5], ["03.26", 758.5], ["04.26", 852.5], ["05.26", 946], ["06.26", 1018]];
document.querySelector("#months").innerHTML = months.map(([label, x]) =>
    line(x, 548, x, 562, "#c8c8c8", 1.2) + text(x + 1.5, 557.5, label, teal)).join("");
```
